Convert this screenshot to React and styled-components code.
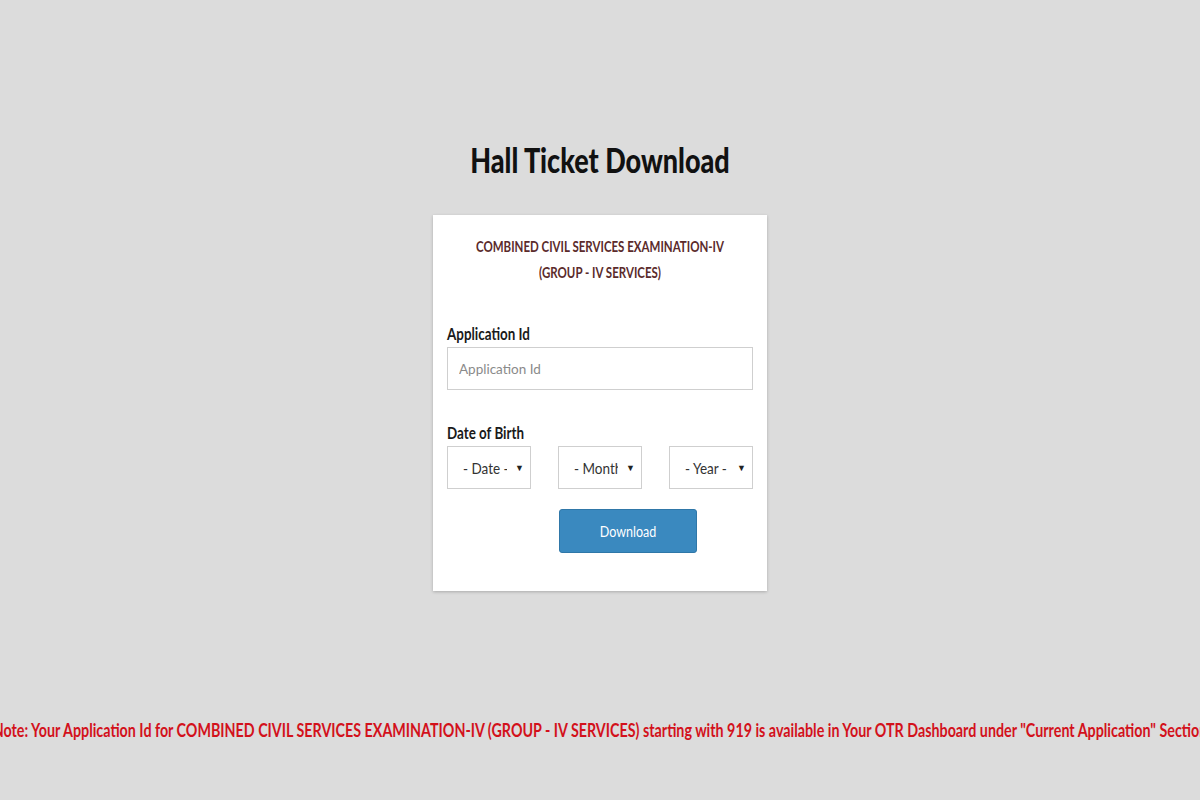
import styled, { createGlobalStyle } from "styled-components"

const Global = createGlobalStyle`
  html, body {
    margin: 0;
    padding: 0;
    background: #dcdcdc;
    overflow: hidden;
  }
  body {
    font-family: Lato, "Open Sans", sans-serif;
  }
`

// the source font is a tall, narrow face; stretch Lato upward to get the same look
const Tall = styled.span`
  display: inline-block;
  transform: scaleY(${(p) => p.$y || 1.28});
`

const Page = styled.div`
  width: 1200px;
  height: 800px;
  display: flex;
  flex-direction: column;
  align-items: center;
  padding-top: 140px;
  box-sizing: border-box;
`

const Title = styled.h1`
  margin: 0;
  font-size: 27px;
  font-weight: 900;
  color: #111;
  line-height: 40px;
`

const Card = styled.div`
  margin-top: 35px;
  width: 334px;
  background: #fff;
  box-sizing: border-box;
  padding: 19px 14px 38px;
  box-shadow: 0 1px 3px rgba(0, 0, 0, 0.22);
  display: flex;
  flex-direction: column;
`

const Exam = styled.div`
  text-align: center;
  color: #5b2b2b;
  font-weight: 700;
  font-size: 11.5px;
  line-height: 26px;
`

const Label = styled.label`
  display: block;
  font-weight: 700;
  font-size: 13.4px;
  line-height: 18px;
  color: #1a1a1a;
  margin-top: ${(p) => p.$top}px;
  margin-bottom: 4px;
`

const Input = styled.input`
  width: 100%;
  height: 43px;
  box-sizing: border-box;
  border: 1px solid #cfcfcf;
  padding: 0 11px;
  font-family: inherit;
  font-size: 13.5px;
  color: #333;
  outline: none;
  &::placeholder {
    color: #8a8a8a;
  }
`

const DobRow = styled.div`
  display: flex;
  justify-content: space-between;
`

const Select = styled.div`
  width: 84px;
  height: 43px;
  box-sizing: border-box;
  border: 1px solid #cfcfcf;
  display: flex;
  align-items: center;
  padding: 0 6px 0 15px;
  font-size: 13.5px;
  color: #333;
`

const SelectText = styled.span`
  width: 44px;
  white-space: nowrap;
  overflow: hidden;
`

const Caret = styled.span`
  margin-left: auto;
  font-size: 9px;
  color: #222;
`

const ButtonRow = styled.div`
  display: flex;
  justify-content: center;
  margin-top: 20px;
  padding-left: 56px;
`

const Button = styled.button`
  width: 138px;
  height: 44px;
  background: #3a89bf;
  border: 1px solid #2f77a8;
  border-radius: 3px;
  color: #fff;
  font-family: inherit;
  font-size: 12.5px;
`

const NoteWrap = styled.div`
  margin-top: auto;
  margin-bottom: 60px;
  width: 100%;
  display: flex;
  justify-content: center;
`

const Note = styled.div`
  flex: none;
  white-space: nowrap;
  color: #d3111b;
  font-weight: 700;
  font-size: 14.3px;
  line-height: 20px;
`

const selects = ["- Date -", "- Month -", "- Year -"]

export default function App() {
  return (
    <>
      <Global />
      <Page>
        <Title>
          <Tall $y={1.25}>Hall Ticket Download</Tall>
        </Title>
        <Card>
          <Exam>
            <Tall>COMBINED CIVIL SERVICES EXAMINATION-IV</Tall>
            <br />
            <Tall>(GROUP - IV SERVICES)</Tall>
          </Exam>
          <Label $top={39}>
            <Tall $y={1.25}>Application Id</Tall>
          </Label>
          <Input placeholder="Application Id" />
          <Label $top={34}>
            <Tall $y={1.25}>Date of Birth</Tall>
          </Label>
          <DobRow>
            {selects.map((s) => (
              <Select key={s}>
                <SelectText>
                  <Tall $y={1.2}>{s}</Tall>
                </SelectText>
                <Caret>▼</Caret>
              </Select>
            ))}
          </DobRow>
          <ButtonRow>
            <Button>
              <Tall $y={1.25}>Download</Tall>
            </Button>
          </ButtonRow>
        </Card>
        <NoteWrap>
          <Note>
            <Tall $y={1.3}>
              Note: Your Application Id for COMBINED CIVIL SERVICES EXAMINATION-IV (GROUP - IV SERVICES) starting with 919 is available in Your OTR Dashboard under "Current Application" Section
            </Tall>
          </Note>
        </NoteWrap>
      </Page>
    </>
  )
}
